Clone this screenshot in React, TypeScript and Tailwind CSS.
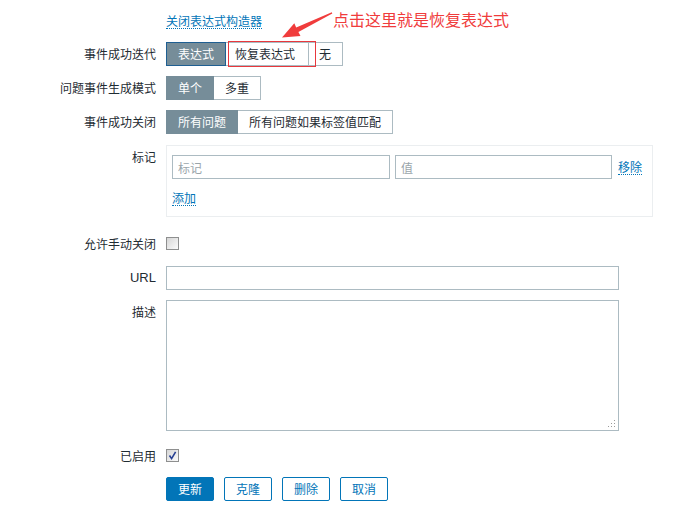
import React from "react";

function Seg({ items, active, focus, pads }: { items: string[]; active: number; focus?: boolean; pads?: string[] }) {
  return (
    <div className="flex">
      {items.map((t, i) => {
        const on = i === active;
        const cls = on
          ? focus
            ? "bg-[#768d99] text-white border-[#1f5f92] z-10"
            : "bg-[#768d99] text-white border-[#768d99] z-10"
          : "bg-white text-[#1f2c33] border-[#acbbc2]";
        const pad = pads && pads[i] ? pads[i] : "px-[11px]";
        return (
          <div
            key={t}
            className={`relative h-[24px] border leading-[22px] whitespace-nowrap ${pad} ${i > 0 ? "-ml-px" : ""} ${cls}`}
          >
            {t}
          </div>
        );
      })}
    </div>
  );
}

function Row({ label, children, className = "", labelClass = "" }: { label: string; children: React.ReactNode; className?: string; labelClass?: string }) {
  return (
    <div className={`flex ${className}`}>
      <div className={`w-[156px] shrink-0 text-right ${labelClass}`}>{label}</div>
      <div className="ml-[10px] flex-1">{children}</div>
    </div>
  );
}

function Check({ checked }: { checked?: boolean }) {
  return (
    <div className="relative w-[13px] h-[13px] border border-[#8e8f8f] bg-gradient-to-br from-[#d6d6d6] to-[#fbfbfb]">
      {checked && (
        <svg viewBox="0 0 11 11" className="absolute left-0 top-0 w-[11px] h-[11px]">
          <path d="M2.5 5.5 L4.6 8.6 L8.6 1.8" fill="none" stroke="#263f92" strokeWidth="1.6" />
        </svg>
      )}
    </div>
  );
}

function Link({ children, className = "" }: { children: React.ReactNode; className?: string }) {
  return (
    <span className={`inline-block text-[#0275b8] leading-[14px] border-b border-dotted border-[#0275b8] ${className}`}>
      {children}
    </span>
  );
}

export default function App() {
  return (
    <div className="relative w-[683px] h-[505px] bg-white text-[12px] text-[#1f2c33] font-['Noto_Sans_CJK_SC','Noto_Sans',sans-serif] overflow-hidden">
      <div className="flex flex-col">
        <Row label="" className="h-[42px]">
          <div className="pt-[12px]">
            <Link>关闭表达式构造器</Link>
          </div>
        </Row>
        <Row label="事件成功迭代" labelClass="leading-[24px]">
          <Seg
            items={["表达式", "恢复表达式", "无"]}
            active={0}
            focus
            pads={["px-[11px]", "pl-[9px] pr-[13px]", "pl-[10px] pr-[11px]"]}
          />
        </Row>
        <Row label="问题事件生成模式" labelClass="leading-[24px]" className="mt-[10px]">
          <Seg items={["单个", "多重"]} active={0} />
        </Row>
        <Row label="事件成功关闭" labelClass="leading-[24px]" className="mt-[10px]">
          <Seg items={["所有问题", "所有问题如果标签值匹配"]} active={0} />
        </Row>
        <Row label="标记" labelClass="pt-[4px] leading-[16px]" className="mt-[11px]">
          <div className="w-[487px] h-[72px] border border-[#ebeef0] pt-[9px] pl-[5px]">
            <div className="flex items-center">
              <input
                placeholder="标记"
                className="w-[218px] h-[24px] border border-[#acbbc2] px-[5px] outline-none placeholder:text-[#9aa5ab]"
              />
              <input
                placeholder="值"
                className="ml-[5px] w-[217px] h-[24px] border border-[#acbbc2] px-[5px] outline-none placeholder:text-[#9aa5ab]"
              />
              <Link className="ml-[6px]">移除</Link>
            </div>
            <div className="mt-[10px]">
              <Link>添加</Link>
            </div>
          </div>
        </Row>
        <Row label="允许手动关闭" labelClass="leading-[13px]" className="mt-[20px]">
          <Check />
        </Row>
        <Row label="URL" labelClass="leading-[24px] font-['Liberation_Sans',sans-serif] text-[13px]" className="mt-[16px]">
          <input className="w-[453px] h-[24px] border border-[#acbbc2] px-[5px] outline-none" />
        </Row>
        <Row label="描述" labelClass="pt-[4px] leading-[16px]" className="mt-[10px]">
          <div className="relative w-[453px] h-[131px]">
            <textarea className="block w-[453px] h-[131px] border border-[#acbbc2] px-[5px] outline-none resize-none" />
            <svg viewBox="0 0 9 9" className="absolute right-[3px] bottom-[3px] w-[9px] h-[9px] pointer-events-none">
              <rect x="7" y="1" width="1" height="1" fill="#9a9a9a" />
              <rect x="4" y="4" width="1" height="1" fill="#9a9a9a" />
              <rect x="7" y="4" width="1" height="1" fill="#9a9a9a" />
              <rect x="1" y="7" width="1" height="1" fill="#9a9a9a" />
              <rect x="4" y="7" width="1" height="1" fill="#9a9a9a" />
              <rect x="7" y="7" width="1" height="1" fill="#9a9a9a" />
            </svg>
          </div>
        </Row>
        <Row label="已启用" labelClass="leading-[13px]" className="mt-[18px]">
          <Check checked />
        </Row>
        <Row label="" className="mt-[15px]">
          <div className="flex gap-[10px]">
            <div className="h-[24px] px-[11px] leading-[22px] border border-[#0275b8] bg-[#0275b8] text-white rounded-[2px]">更新</div>
            <div className="h-[24px] px-[11px] leading-[22px] border border-[#0275b8] bg-white text-[#0275b8] rounded-[2px]">克隆</div>
            <div className="h-[24px] px-[11px] leading-[22px] border border-[#0275b8] bg-white text-[#0275b8] rounded-[2px]">删除</div>
            <div className="h-[24px] px-[11px] leading-[22px] border border-[#0275b8] bg-white text-[#0275b8] rounded-[2px]">取消</div>
          </div>
        </Row>
      </div>

      {/* annotation overlay */}
      <div className="absolute left-[228px] top-[41px] w-[88px] h-[26px] border border-[#e8383d] pointer-events-none z-20" />
      <div className="absolute left-[333px] top-[8px] text-[16px] leading-[22px] text-[#f03c3c] whitespace-nowrap">
        点击这里就是恢复表达式
      </div>
      <svg
        viewBox="275 5 65 40"
        className="absolute left-[275px] top-[5px] w-[65px] h-[40px] pointer-events-none"
      >
        <polygon
          points="331.8,12.3 296.2,27.4 294.3,23.2 282,37.5 300.5,36 298.4,31.9 332.3,13.6"
          fill="#f03c3c"
        />
      </svg>
    </div>
  );
}
